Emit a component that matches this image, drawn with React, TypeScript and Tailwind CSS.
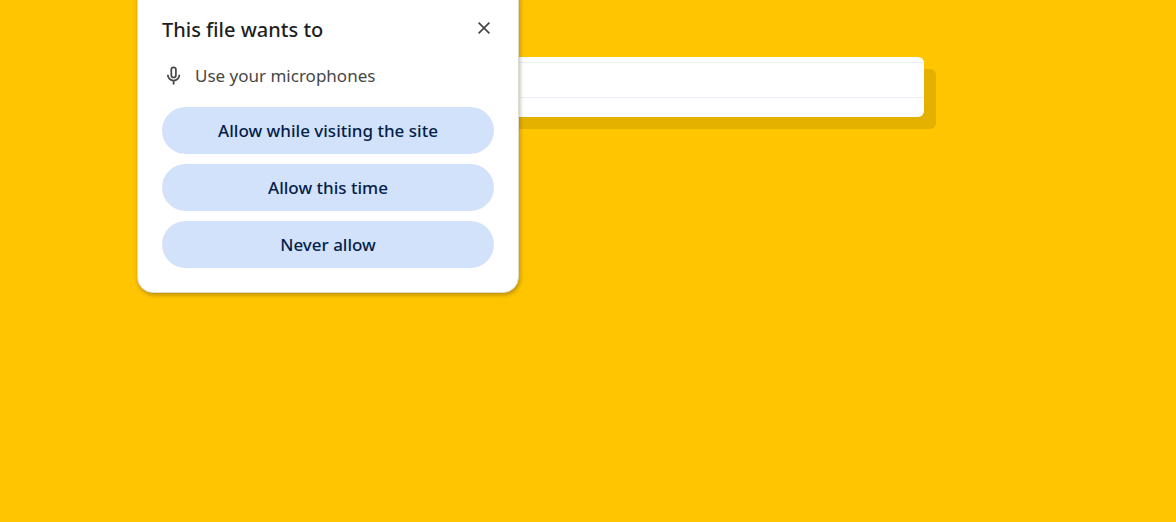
import React from "react";

const choices = ["Allow while visiting the site", "Allow this time", "Never allow"];

function MicIcon() {
  return (
    <svg viewBox="0 0 24 24" className="size-6 shrink-0" fill="none" stroke="#474747" aria-hidden="true">
      <rect x="9.3" y="3.3" width="4.6" height="10.2" rx="2.3" strokeWidth="1.7" />
      <path d="M5.8 10.8a5.8 5.8 0 0 0 11.6 0M11.6 16.6v4" strokeWidth="1.8" />
    </svg>
  );
}

function PermissionDialog() {
  return (
    <section
      role="dialog"
      aria-labelledby="permission-title"
      className="absolute -top-4 left-[137px] w-[382px] rounded-2xl border border-[#dedbd0] bg-white px-6 pt-[31px] pb-6 shadow-[1px_2px_4px_0_rgba(0,0,0,0.28)]"
    >
      <header className="flex items-start justify-between">
        <h1 id="permission-title" className="text-xl leading-7 font-medium text-[#1f1f1f]">
          This file wants to
        </h1>
        <button type="button" aria-label="Close" className="flex size-5 items-center justify-center pt-1">
          <svg viewBox="0 0 12 12" className="size-3 shrink-0" stroke="#474747" strokeWidth="1.7" aria-hidden="true">
            <path d="M.6.6 11.4 11.4M11.4.6.6 11.4" />
          </svg>
        </button>
      </header>
      <p className="mt-5 flex h-6 items-center gap-[9px] text-[17px] text-[#474747]">
        <MicIcon />
        Use your microphones
      </p>
      <div className="mt-[19px] flex flex-col gap-2.5">
        {choices.map((choice) => (
          <button
            key={choice}
            type="button"
            className="h-[47px] rounded-full bg-[#d3e2fb] text-[17px] font-medium text-[#041e49]"
          >
            {choice}
          </button>
        ))}
      </div>
    </section>
  );
}

export default function App() {
  return (
    <main className="relative min-h-screen overflow-hidden bg-[#ffc501] px-6 pt-[57px] font-['Noto_Sans',sans-serif]">
      <div className="mx-auto h-[60px] max-w-2xl rounded-md bg-white pt-[5px] shadow-[12px_12px_0_0_#e5b100]">
        <div className="h-9 border-y border-[#eaf0f5]" />
      </div>
      <PermissionDialog />
    </main>
  );
}
